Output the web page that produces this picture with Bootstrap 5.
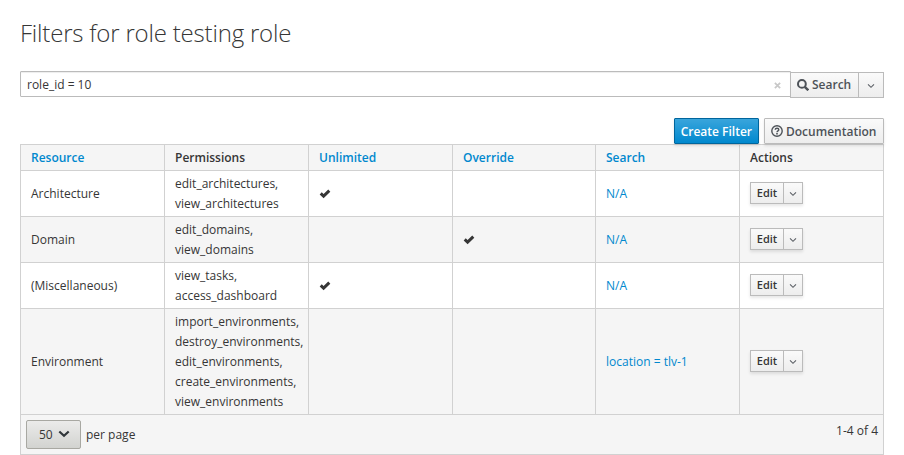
<!DOCTYPE html>
<html lang="en">
<head>
<meta charset="utf-8">
<meta name="viewport" content="width=device-width, initial-scale=1">
<title>Filters for role testing role</title>
<link href="https://cdn.jsdelivr.net/npm/bootstrap@5.3.0/dist/css/bootstrap.min.css" rel="stylesheet">
<style>
body{font-family:"Open Sans","Liberation Sans",sans-serif;font-size:12px;line-height:20px;color:#363636;overflow:hidden}
a{color:#0088ce;text-decoration:none}
.page-body{padding:18px 20px 0}
.page-title{font-size:24px;font-weight:300;line-height:30px;letter-spacing:-.19px;margin:0 0 23px}
.search-row{height:27px}
.search-box{position:relative}
.search-box .form-control{height:26px;border:1px solid #bbb;border-radius:1px 0 0 1px;padding:2px 6px;font-size:12px;line-height:20px;color:#363636;box-shadow:inset 0 1px 1px rgba(0,0,0,.075)}
.search-clear{position:absolute;right:10px;top:11px;display:block}
.btn-plain,.btn-create{border-radius:1px;font-size:12px;font-weight:600;line-height:20px;padding:2px 6px;border:1px solid #bbb;height:26px;white-space:nowrap}
.btn-plain{color:#4d5258;background:linear-gradient(#fafafa,#ededed);box-shadow:0 2px 3px rgba(3,3,3,.1)}
.btn-create{color:#fff;border-color:#00659c;background:linear-gradient(#39a5dc,#0088ce);box-shadow:0 2px 3px rgba(3,3,3,.1)}
.search-row .btn-plain{margin-top:1px;margin-left:-1px;border-radius:0;box-shadow:none}
.search-go{width:69px}
.search-more{width:26px}
.btn-icon{margin-right:3px;flex-shrink:0}
.toolbar-row{margin-top:20px;gap:5px}
.btn-create{padding:3px 6px 1px}
.btn-doc{width:120px;padding-top:3px;padding-bottom:1px}
.btn-doc .btn-icon{margin-bottom:2px}
.filter-table{table-layout:fixed;width:864px;margin:0;border-collapse:collapse;color:#363636;border:1px solid #d1d1d1}
.filter-table>:not(caption)>*>*{border:1px solid #d1d1d1;padding:3px 10px 2px;vertical-align:middle;color:#363636;background:none;box-shadow:none}
.filter-table th{font-weight:600}
.filter-table .col-wide{width:144px}
.filter-table>thead>tr,.filter-table>tbody>tr:nth-child(even){background:#f5f5f5}
.filter-table td:nth-child(2){white-space:nowrap}
.filter-table svg{display:block}
.row-actions{height:22px;display:flex;box-shadow:0 2px 3px rgba(3,3,3,.1);width:53px;margin-bottom:2px}
.row-actions .btn-plain{height:22px;font-size:11px;line-height:18px;padding:1px 6px;box-shadow:none;color:#363636;border-radius:0}
.row-actions .act-edit{width:34px;padding:1px 0}
.row-actions .act-more{width:20px;margin-left:-1px}
.row-actions .act-more svg,.search-more svg{color:#5c6066;margin-top:1px}
.pager-bar{height:40px;border:1px solid #d1d1d1;border-top:0;background:#f5f5f5;padding:5px 5px 0}
.per-page-btn{width:55px;height:29px;border:1px solid #a8a8a2;border-radius:2px;background:linear-gradient(#ebebea,#d2d3d0);font-size:12px;line-height:20px;color:#363636;padding:0 10px 0 12px}
.per-page-btn svg{margin-bottom:1px}
.per-page-label{margin-left:5px}
.page-count{line-height:20px;margin-top:1px}
</style>
<script src="https://cdn.jsdelivr.net/npm/bootstrap@5.3.0/dist/js/bootstrap.bundle.min.js"></script>
</head>
<body>
<svg class="d-none" xmlns="http://www.w3.org/2000/svg">
<symbol id="i-check" viewBox="0 0 12 10"><path d="M1.7 4.4 4.6 7.1 10.3 1.7" fill="none" stroke="currentColor" stroke-width="3"/></symbol>
<symbol id="i-down" viewBox="0 0 8 6"><path d="M1 1.3 4 4.3 7 1.3" fill="none" stroke="currentColor" stroke-width="1.1"/></symbol>
</svg>
<main class="page-body">
<h1 class="page-title">Filters for role testing role</h1>
<form class="search-row d-flex">
<div class="search-box flex-grow-1">
<input class="form-control" type="text" value="role_id = 10" aria-label="Filter">
<svg class="search-clear" width="7" height="7" viewBox="0 0 8 8"><path d="M1 1 7 7M7 1 1 7" stroke="#c8c8c8" stroke-width="2"/></svg>
</div>
<button type="button" class="btn btn-plain search-go d-flex align-items-center"><svg class="btn-icon" width="12" height="12" viewBox="0 0 12 12"><circle cx="4.9" cy="4.9" r="3.9" fill="none" stroke="currentColor" stroke-width="2"/><path d="M7.8 7.8 11.3 11.3" stroke="currentColor" stroke-width="2.4"/></svg>Search</button>
<button type="button" class="btn btn-plain search-more d-flex align-items-center justify-content-center p-0" aria-label="More"><svg width="8" height="6"><use href="#i-down"/></svg></button>
</form>
<div class="toolbar-row d-flex justify-content-end">
<a href="#" class="btn btn-create">Create Filter</a>
<a href="#" class="btn btn-plain btn-doc d-flex align-items-center"><svg class="btn-icon" width="12" height="12" viewBox="0 0 12 12"><circle cx="6" cy="6" r="5.2" fill="none" stroke="currentColor" stroke-width="1.4"/><path d="M4.2 4.7C4.3 2.8 7.8 2.8 7.8 4.7 7.8 5.9 6 5.8 6 7.2" fill="none" stroke="currentColor" stroke-width="1.4"/><path d="M5.2 8h1.6v1.5H5.2z" fill="currentColor"/></svg>Documentation</a>
</div>
<table class="table filter-table">
<colgroup><col class="col-wide"><col class="col-wide"><col class="col-wide"><col><col class="col-wide"><col class="col-wide"></colgroup>
<thead><tr><th><a href="#">Resource</a></th><th>Permissions</th><th><a href="#">Unlimited</a></th><th><a href="#">Override</a></th><th><a href="#">Search</a></th><th>Actions</th></tr></thead>
<tbody>
<tr><td>Architecture</td><td>edit_architectures,<br>view_architectures</td><td><svg width="12" height="10"><use href="#i-check"/></svg></td><td></td><td><a href="#">N/A</a></td><td><div class="row-actions"><a href="#" class="btn btn-plain act-edit">Edit</a><button type="button" class="btn btn-plain act-more d-flex align-items-center justify-content-center p-0" aria-label="More"><svg width="8" height="6"><use href="#i-down"/></svg></button></div></td></tr>
<tr><td>Domain</td><td>edit_domains,<br>view_domains</td><td></td><td><svg width="12" height="10"><use href="#i-check"/></svg></td><td><a href="#">N/A</a></td><td><div class="row-actions"><a href="#" class="btn btn-plain act-edit">Edit</a><button type="button" class="btn btn-plain act-more d-flex align-items-center justify-content-center p-0" aria-label="More"><svg width="8" height="6"><use href="#i-down"/></svg></button></div></td></tr>
<tr><td>(Miscellaneous)</td><td>view_tasks,<br>access_dashboard</td><td><svg width="12" height="10"><use href="#i-check"/></svg></td><td></td><td><a href="#">N/A</a></td><td><div class="row-actions"><a href="#" class="btn btn-plain act-edit">Edit</a><button type="button" class="btn btn-plain act-more d-flex align-items-center justify-content-center p-0" aria-label="More"><svg width="8" height="6"><use href="#i-down"/></svg></button></div></td></tr>
<tr><td>Environment</td><td>import_environments,<br>destroy_environments,<br>edit_environments,<br>create_environments,<br>view_environments</td><td></td><td></td><td><a href="#">location = tlv-1</a></td><td><div class="row-actions"><a href="#" class="btn btn-plain act-edit">Edit</a><button type="button" class="btn btn-plain act-more d-flex align-items-center justify-content-center p-0" aria-label="More"><svg width="8" height="6"><use href="#i-down"/></svg></button></div></td></tr>
</tbody>
</table>
<div class="pager-bar d-flex justify-content-between align-items-start">
<div class="d-flex align-items-center">
<button type="button" class="btn per-page-btn d-flex align-items-center justify-content-between">50<svg width="12" height="8" viewBox="0 0 12 8"><path d="M1.3 1.5 6 5.8 10.7 1.5" fill="none" stroke="#30363a" stroke-width="2.2"/></svg></button>
<span class="per-page-label">per page</span>
</div>
<span class="page-count">1-4 of 4</span>
</div>
</main>
</body>
</html>
